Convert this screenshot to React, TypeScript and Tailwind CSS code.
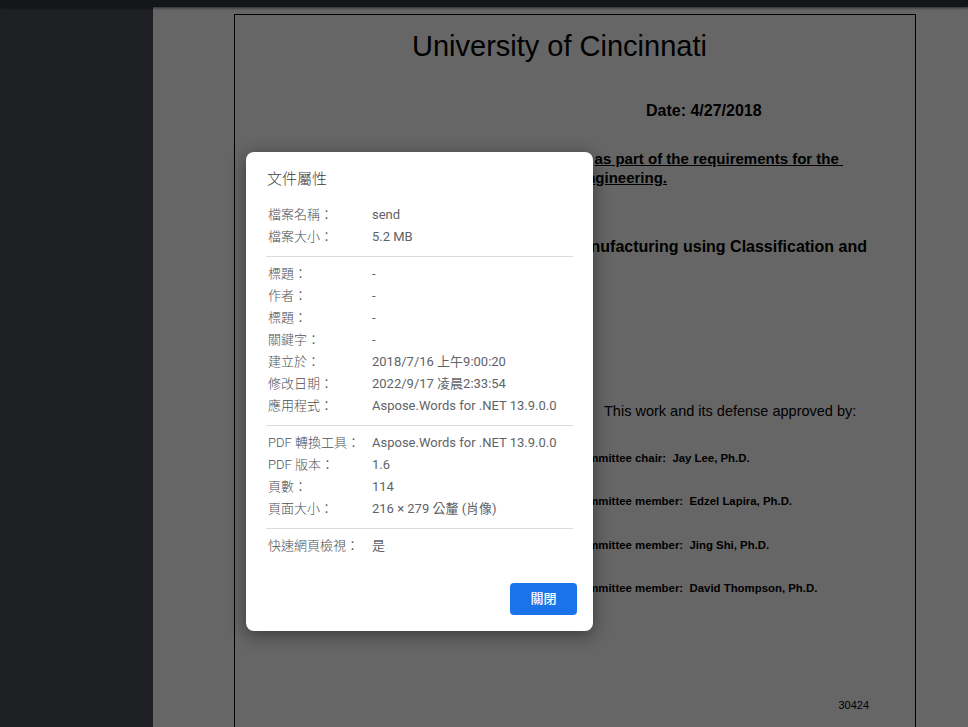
import React from "react";

const groups: [string, string][][] = [
  [
    ["檔案名稱：", "send"],
    ["檔案大小：", "5.2 MB"],
  ],
  [
    ["標題：", "-"],
    ["作者：", "-"],
    ["標題：", "-"],
    ["關鍵字：", "-"],
    ["建立於：", "2018/7/16 上午9:00:20"],
    ["修改日期：", "2022/9/17 凌晨2:33:54"],
    ["應用程式：", "Aspose.Words for .NET 13.9.0.0"],
  ],
  [
    ["PDF 轉換工具：", "Aspose.Words for .NET 13.9.0.0"],
    ["PDF 版本：", "1.6"],
    ["頁數：", "114"],
    ["頁面大小：", "216 × 279 公釐 (肖像)"],
  ],
  [["快速網頁檢視：", "是"]],
];

const committee = [
  ["Committee chair:", "Jay Lee, Ph.D.", "mt-[30px]"],
  ["Committee member:", "Edzel Lapira, Ph.D.", "mt-[29px]"],
  ["Committee member:", "Jing Shi, Ph.D.", "mt-[30px]"],
  ["Committee member:", "David Thompson, Ph.D.", "mt-[29px]"],
];

function PageContent() {
  return (
    <div className="ml-[81px] mt-[7px] w-[682px] h-[900px] border border-black text-black font-['Liberation_Sans',Arial,sans-serif]">
      <div className="mt-[13px] pl-[177px] text-[29px] leading-[36px]">University of Cincinnati</div>
      <div className="mt-[37px] pl-[411px] text-[16px] leading-[20px] font-bold">Date: 4/27/2018</div>
      <div className="mt-[28px] pr-[72px] text-right text-[15px] leading-[19px] font-bold underline whitespace-pre">
        {"as part of the requirements for the "}
      </div>
      <div className="pr-[248px] text-right text-[15px] leading-[19px] font-bold underline whitespace-nowrap">
        Engineering.
      </div>
      <div className="mt-[50px] pr-[48px] text-right text-[16px] leading-[20px] font-bold whitespace-nowrap">
        Manufacturing using Classification and
      </div>
      <div className="mt-[144px] pl-[369px] text-[14.5px] leading-[20px]">This work and its defense approved by:</div>
      {committee.map(([role, name, mt]) => (
        <div key={name} className={`${mt} pl-[338px] text-[11.4px] leading-[14px] font-bold whitespace-pre`}>
          {role}  {name}
        </div>
      ))}
      <div className="mt-[103px] pr-[46px] text-right text-[11px] leading-[14px]">30424</div>
    </div>
  );
}

function PropertiesDialog() {
  return (
    <div className="absolute left-[246px] top-[152px] w-[347px] h-[479px] bg-white rounded-lg shadow-[0_4px_18px_rgba(0,0,0,0.45)] flex flex-col px-5 pt-[17px] pb-4 font-['Roboto','Noto_Sans_CJK_TC',sans-serif]">
      <div className="pl-px text-[15px] leading-[20px] font-light text-[#3c4043]">文件屬性</div>
      <div className="mt-[15px] flex flex-col">
        {groups.map((rows, gi) => (
          <div key={gi}>
            {gi > 0 && <div className="h-px bg-[#dadce0] mt-2 mb-[6px]" />}
            {rows.map(([label, value], ri) => (
              <div key={ri} className="grid grid-cols-[106px_1fr] text-[13px] leading-[22px]">
                <span className="pl-[2px] font-light text-[#4d5156]">{label}</span>
                <span className="text-[#5f6368]">{value}</span>
              </div>
            ))}
          </div>
        ))}
      </div>
      <div className="mt-auto flex justify-end -mr-1">
        <button className="w-[67px] h-8 rounded bg-[#1a73e8] text-white text-[13px] font-medium">關閉</button>
      </div>
    </div>
  );
}

export default function App() {
  return (
    <div className="relative h-screen w-full overflow-hidden flex flex-col bg-[#1f2023]">
      <div className="h-[7px] bg-[#141518] shadow-[0_1px_3px_rgba(0,0,0,0.6)] z-10 shrink-0" />
      <div className="flex flex-1 min-h-0">
        <div className="w-[153px] shrink-0 bg-[#1f2023]" />
        <div className="relative flex-1 bg-white overflow-hidden">
          <PageContent />
          <div className="absolute inset-0 bg-black/60" />
        </div>
      </div>
      <PropertiesDialog />
    </div>
  );
}
